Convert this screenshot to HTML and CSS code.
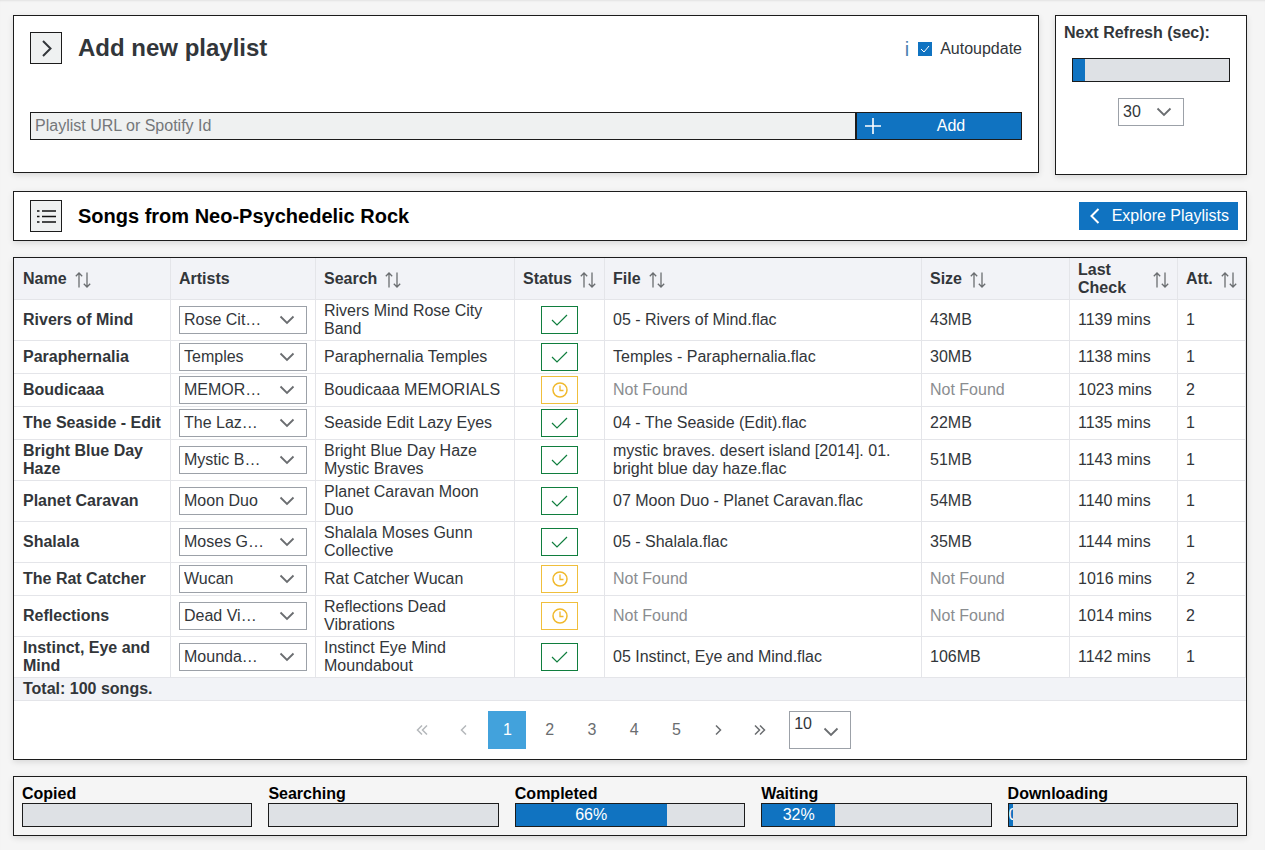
FILE: index.html
```html
<!doctype html>
<html lang="en">
<head>
<meta charset="utf-8">
<title>Songs from Neo-Psychedelic Rock</title>
<link rel="stylesheet" href="styles.css">
</head>
<body>

	<svg class="defs" width="0" height="0" aria-hidden="true">
		<symbol id="icoDown" viewBox="0 0 16 10"><path d="M1.500 1.500 8 8l6.500-6.500" fill="none" stroke="currentColor" stroke-width="1.800"/></symbol>
		<symbol id="icoSort" viewBox="0 0 16 16"><path d="M4 15.500V1M.8 4.200 4 1l3.200 3.200M12 .5V15M8.800 11.800 12 15l3.200-3.200" fill="none" stroke="currentColor" stroke-width="1.300"/></symbol>
		<symbol id="icoCheck" viewBox="0 0 17 12"><path d="M1 6 6 11 16 1" fill="none" stroke="currentColor" stroke-width="1.200"/></symbol>
		<symbol id="icoClock" viewBox="0 0 16 16"><circle cx="8" cy="8" r="7" fill="none" stroke="currentColor" stroke-width="1.500"/><path d="M8 3.500V8.500H11.500" fill="none" stroke="currentColor" stroke-width="1.300"/></symbol>
		<symbol id="icoFirst" viewBox="0 0 12 10"><path d="M6 .5 1.500 5 6 9.500M11 .5 6.500 5 11 9.500" fill="none" stroke="currentColor" stroke-width="1.500"/></symbol>
		<symbol id="icoPrev" viewBox="0 0 12 10"><path d="M8 .5 3.500 5 8 9.500" fill="none" stroke="currentColor" stroke-width="1.500"/></symbol>
		<symbol id="icoNext" viewBox="0 0 12 10"><path d="M4 .5 8.500 5 4 9.500" fill="none" stroke="currentColor" stroke-width="1.500"/></symbol>
		<symbol id="icoLast" viewBox="0 0 12 10"><path d="M1 .5 5.500 5 1 9.500M6 .5 10.500 5 6 9.500" fill="none" stroke="currentColor" stroke-width="1.500"/></symbol>
	</svg>

	<div class="topRow">

		<div class="panel addPanel">

			<div class="addHead">
				<div class="iconBtn"><svg class="toggleIco" width="12" height="17" viewBox="0 0 12 17"><path d="M2 1 9.500 8.500 2 16" fill="none" stroke="#32363a" stroke-width="2"/></svg></div>
				<h2 class="addTitle">Add new playlist</h2>
				<span class="info">i</span>
				<span class="checkBox"><svg width="10" height="8" viewBox="0 0 10 8"><path d="M1 4 4 7 9 1" fill="none" stroke="#fff" stroke-width="1"/></svg></span>
				<span class="autoLabel">Autoupdate</span>
			</div>

			<div class="addForm">
				<div class="addInput">Playlist URL or Spotify Id</div>
				<div class="addBtn">
					<svg class="plus" width="16" height="16" viewBox="0 0 16 16"><path d="M8 0V16M0 8H16" fill="none" stroke="#fff" stroke-width="1.600"/></svg>
					<span class="addLabel">Add</span>
				</div>
			</div>

		</div>

		<div class="panel refreshPanel">
			<div class="refreshTitle">Next Refresh (sec):</div>
			<div class="bar refreshBar"><div class="barFill" style="width: 8%"></div></div>
			<div class="select refreshSelect"><span class="selectText">30</span><svg class="selectIco"><use href="#icoDown"/></svg></div>
		</div>

	</div>

	<div class="panel songsBar">
		<div class="iconBtn">
			<svg width="19" height="13" viewBox="0 0 19 13"><path d="M5 1H19M5 6.500H19M5 12H19M0 1H2.500M0 6.500H2.500M0 12H2.500" fill="none" stroke="#111" stroke-width="1.700"/></svg>
		</div>
		<h3 class="songsTitle">Songs from Neo-Psychedelic Rock</h3>
		<div class="exploreBtn">
			<svg width="10" height="16" viewBox="0 0 10 16"><path d="M8.500 1 1.500 8 8.500 15" fill="none" stroke="#fff" stroke-width="2"/></svg>
			<span>Explore Playlists</span>
		</div>
	</div>

	<div class="panel tablePanel">

		<table class="songs">
			<colgroup>
				<col class="colName"><col class="colArtists"><col class="colSearch"><col class="colStatus">
				<col class="colFile"><col class="colSize"><col class="colCheck"><col class="colAtt">
			</colgroup>
			<thead>
				<tr>
					<th class="first"><div class="th"><span>Name</span><svg class="sort"><use href="#icoSort"/></svg></div></th>
					<th><div class="th"><span>Artists</span></div></th>
					<th><div class="th"><span>Search</span><svg class="sort"><use href="#icoSort"/></svg></div></th>
					<th><div class="th"><span>Status</span><svg class="sort"><use href="#icoSort"/></svg></div></th>
					<th><div class="th"><span>File</span><svg class="sort"><use href="#icoSort"/></svg></div></th>
					<th><div class="th"><span>Size</span><svg class="sort"><use href="#icoSort"/></svg></div></th>
					<th><div class="th"><span>Last Check</span><svg class="sort"><use href="#icoSort"/></svg></div></th>
					<th><div class="th"><span>Att.</span><svg class="sort"><use href="#icoSort"/></svg></div></th>
				</tr>
			</thead>
			<tbody>
				<tr>
					<td class="name">Rivers of Mind</td>
					<td><div class="select"><span class="selectText">Rose City Band</span><svg class="selectIco"><use href="#icoDown"/></svg></div></td>
					<td>Rivers Mind Rose City Band</td>
					<td><div class="status ok"><svg class="icoOk"><use href="#icoCheck"/></svg></div></td>
					<td>05 - Rivers of Mind.flac</td>
					<td>43MB</td>
					<td>1139 mins</td>
					<td>1</td>
				</tr>
				<tr>
					<td class="name">Paraphernalia</td>
					<td><div class="select"><span class="selectText">Temples</span><svg class="selectIco"><use href="#icoDown"/></svg></div></td>
					<td>Paraphernalia Temples</td>
					<td><div class="status ok"><svg class="icoOk"><use href="#icoCheck"/></svg></div></td>
					<td>Temples - Paraphernalia.flac</td>
					<td>30MB</td>
					<td>1138 mins</td>
					<td>1</td>
				</tr>
				<tr>
					<td class="name">Boudicaaa</td>
					<td><div class="select"><span class="selectText">MEMORIALS</span><svg class="selectIco"><use href="#icoDown"/></svg></div></td>
					<td>Boudicaaa MEMORIALS</td>
					<td><div class="status wait"><svg class="icoWait"><use href="#icoClock"/></svg></div></td>
					<td class="missing">Not Found</td>
					<td class="missing">Not Found</td>
					<td>1023 mins</td>
					<td>2</td>
				</tr>
				<tr>
					<td class="name">The Seaside - Edit</td>
					<td><div class="select"><span class="selectText">The Lazy Eyes</span><svg class="selectIco"><use href="#icoDown"/></svg></div></td>
					<td>Seaside Edit Lazy Eyes</td>
					<td><div class="status ok"><svg class="icoOk"><use href="#icoCheck"/></svg></div></td>
					<td>04 - The Seaside (Edit).flac</td>
					<td>22MB</td>
					<td>1135 mins</td>
					<td>1</td>
				</tr>
				<tr>
					<td class="name">Bright Blue Day Haze</td>
					<td><div class="select"><span class="selectText">Mystic Braves</span><svg class="selectIco"><use href="#icoDown"/></svg></div></td>
					<td>Bright Blue Day Haze Mystic Braves</td>
					<td><div class="status ok"><svg class="icoOk"><use href="#icoCheck"/></svg></div></td>
					<td>mystic braves. desert island [2014]. 01. bright blue day haze.flac</td>
					<td>51MB</td>
					<td>1143 mins</td>
					<td>1</td>
				</tr>
				<tr>
					<td class="name">Planet Caravan</td>
					<td><div class="select"><span class="selectText">Moon Duo</span><svg class="selectIco"><use href="#icoDown"/></svg></div></td>
					<td>Planet Caravan Moon Duo</td>
					<td><div class="status ok"><svg class="icoOk"><use href="#icoCheck"/></svg></div></td>
					<td>07 Moon Duo - Planet Caravan.flac</td>
					<td>54MB</td>
					<td>1140 mins</td>
					<td>1</td>
				</tr>
				<tr>
					<td class="name">Shalala</td>
					<td><div class="select"><span class="selectText">Moses Gunn Collective</span><svg class="selectIco"><use href="#icoDown"/></svg></div></td>
					<td>Shalala Moses Gunn Collective</td>
					<td><div class="status ok"><svg class="icoOk"><use href="#icoCheck"/></svg></div></td>
					<td>05 - Shalala.flac</td>
					<td>35MB</td>
					<td>1144 mins</td>
					<td>1</td>
				</tr>
				<tr>
					<td class="name">The Rat Catcher</td>
					<td><div class="select"><span class="selectText">Wucan</span><svg class="selectIco"><use href="#icoDown"/></svg></div></td>
					<td>Rat Catcher Wucan</td>
					<td><div class="status wait"><svg class="icoWait"><use href="#icoClock"/></svg></div></td>
					<td class="missing">Not Found</td>
					<td class="missing">Not Found</td>
					<td>1016 mins</td>
					<td>2</td>
				</tr>
				<tr>
					<td class="name">Reflections</td>
					<td><div class="select"><span class="selectText">Dead Vibrations</span><svg class="selectIco"><use href="#icoDown"/></svg></div></td>
					<td>Reflections Dead Vibrations</td>
					<td><div class="status wait"><svg class="icoWait"><use href="#icoClock"/></svg></div></td>
					<td class="missing">Not Found</td>
					<td class="missing">Not Found</td>
					<td>1014 mins</td>
					<td>2</td>
				</tr>
				<tr>
					<td class="name">Instinct, Eye and Mind</td>
					<td><div class="select"><span class="selectText">Moundabout</span><svg class="selectIco"><use href="#icoDown"/></svg></div></td>
					<td>Instinct Eye Mind Moundabout</td>
					<td><div class="status ok"><svg class="icoOk"><use href="#icoCheck"/></svg></div></td>
					<td>05 Instinct, Eye and Mind.flac</td>
					<td>106MB</td>
					<td>1142 mins</td>
					<td>1</td>
				</tr>
			</tbody>
		</table>

		<div class="total">Total: 100 songs.</div>

		<div class="pager">
			<span class="page off"><svg class="pageIco"><use href="#icoFirst"/></svg></span>
			<span class="page off"><svg class="pageIco"><use href="#icoPrev"/></svg></span>
			<span class="page active">1</span>
			<span class="page">2</span>
			<span class="page">3</span>
			<span class="page">4</span>
			<span class="page">5</span>
			<span class="page"><svg class="pageIco"><use href="#icoNext"/></svg></span>
			<span class="page"><svg class="pageIco"><use href="#icoLast"/></svg></span>
			<div class="select pageSelect"><span class="selectText">10</span><svg class="selectIco"><use href="#icoDown"/></svg></div>
		</div>

	</div>

	<div class="panel statsPanel">
		<div class="stat"><div class="statLabel">Copied</div><div class="bar statBar"></div></div>
		<div class="stat"><div class="statLabel">Searching</div><div class="bar statBar"></div></div>
		<div class="stat"><div class="statLabel">Completed</div><div class="bar statBar"><div class="barFill" style="width: 66%">66%</div></div></div>
		<div class="stat"><div class="statLabel">Waiting</div><div class="bar statBar"><div class="barFill" style="width: 32%">32%</div></div></div>
		<div class="stat"><div class="statLabel">Downloading</div><div class="bar statBar"><div class="barFill" style="width: 2%">0%</div></div></div>
	</div>

</body>
</html>
```

FILE: styles.css
```css
	html { --blue: #1073c1; --ink: #32363a; --line: #1c1c1c; --cell: #e4e5e9; --head: #f2f3f7; --track: #dee1e5; height: 100%; }

	body { background-color: #f5f5f5; box-shadow: inset 0 2px 2px -1px rgba( 0, 0, 0, .08 ); box-sizing: border-box; color: var( --ink ); font: 16px/18px "Liberation Sans", Arial, sans-serif; height: 100%; margin: 0; overflow: hidden; padding: 15px 18px 0 13px; }

	h2, h3 { margin: 0; }

	.defs { position: absolute; }

	.panel { background-color: #fff; border: 1px solid var( --line ); box-shadow: 0 2px 6px rgba( 0, 0, 0, .12 ); box-sizing: border-box; }

	.topRow { align-items: flex-start; display: flex; gap: 16px; margin-bottom: 16px; }

	.addPanel { flex: 1; height: 158px; padding: 16px 16px 0; }
	.addHead { align-items: center; display: flex; height: 32px; }
	.addTitle { flex: 1; font-size: 24px; line-height: 32px; margin-left: 16px; }
	.info { color: #4a7fb0; font-size: 20px; margin: 2px 9px 0 0; }
	.checkBox { align-items: center; background-color: var( --blue ); display: flex; height: 14px; justify-content: center; margin: 2px 8px 0 0; width: 14px; }
	.autoLabel { margin-top: 2px; white-space: nowrap; }

	.iconBtn { align-items: center; background-color: #eff1f1; border: 1px solid var( --line ); box-sizing: border-box; display: flex; flex: none; height: 32px; justify-content: center; width: 32px; }
	.toggleIco { margin-left: 2px; }

	.addForm { display: flex; height: 28px; margin-top: 48px; }
	.addInput { background-color: #eff1f1; border: 1px solid var( --line ); box-sizing: border-box; color: #74777a; flex: 1; line-height: 26px; padding-left: 4px; }
	.addBtn { align-items: center; background-color: var( --blue ); border: 1px solid var( --line ); box-sizing: border-box; color: #fff; display: flex; padding-left: 8px; width: 166px; }
	.plus { flex: none; }
	.addLabel { flex: 1; text-align: center; }

	.refreshPanel { flex: none; height: 160px; padding: 7px 16px 0 8px; width: 192px; }
	.refreshTitle { font-weight: bold; line-height: 20px; white-space: nowrap; }
	.refreshBar { height: 24px; margin: 15px 0 0 8px; width: 158px; }
	.refreshSelect { margin: 16px 0 0 54px; width: 66px; }

	.bar { background-color: var( --track ); border: 1px solid var( --line ); box-sizing: border-box; overflow: hidden; }
	.barFill { background-color: var( --blue ); color: #fff; height: 100%; line-height: 21px; overflow: hidden; text-align: center; white-space: nowrap; }

	.select { align-items: center; background-color: #fff; border: 1px solid #9ca1a8; box-sizing: border-box; display: flex; height: 28px; padding: 0 11px 0 4px; }
	.selectText { flex: 1; min-width: 0; overflow: hidden; text-overflow: ellipsis; white-space: nowrap; }
	.selectIco { color: #6a6d70; flex: none; height: 10px; margin-left: 14px; width: 16px; }

	.songsBar { align-items: center; display: flex; height: 50px; margin-bottom: 16px; padding: 0 8px 0 16px; }
	.songsTitle { color: #000; flex: 1; font-size: 20px; line-height: 24px; margin-left: 16px; }
	.exploreBtn { align-items: center; background-color: var( --blue ); color: #fff; display: flex; gap: 12px; height: 28px; padding: 0 9px 0 11px; }

	.tablePanel { height: 503px; margin-bottom: 16px; }

	.songs { border-collapse: separate; border-spacing: 0; table-layout: fixed; width: 100%; }
	.colName { width: 157px; }
	.colArtists { width: 145px; }
	.colSearch { width: 199px; }
	.colStatus { width: 90px; }
	.colFile { width: 317px; }
	.colSize { width: 148px; }
	.colCheck { width: 108px; }
	.colAtt { width: 68px; }

	.songs th { background-color: var( --head ); border-bottom: 1px solid var( --cell ); border-right: 1px solid var( --cell ); font-weight: bold; padding: 3px 8px 2px; text-align: left; }
	.songs td { border-bottom: 1px solid var( --cell ); border-right: 1px solid var( --cell ); padding: 2px 8px; }

	.th { align-items: center; display: flex; gap: 8px; min-height: 36px; }
	.sort { color: #6a6d70; flex: none; height: 16px; margin-top: 2px; width: 16px; }

	.songs th.first, .songs .name { font-weight: bold; padding-left: 9px; }
	.songs .missing { color: #8a8d90; }

	.status { align-items: center; border: 1px solid; box-sizing: border-box; display: flex; height: 28px; justify-content: center; margin: 0 auto; width: 37px; }
	.ok { border-color: #107e3e; color: #107e3e; }
	.wait { border-color: #f0bf3c; color: #f0b92c; }
	.icoOk { height: 12px; width: 17px; }
	.icoWait { height: 16px; width: 16px; }

	.total { background-color: var( --head ); border-bottom: 1px solid var( --cell ); font-weight: bold; line-height: 18px; padding: 2px 9px; }

	.pager { align-items: center; display: flex; gap: 4.25px; justify-content: center; padding: 10px 5px 10px 0; }
	.page { align-items: center; color: #6a6d70; display: flex; height: 38px; justify-content: center; width: 38px; }
	.page.off { color: #b5b8bb; }
	.page.active { background-color: #42a2dc; color: #fff; }
	.pageIco { height: 10px; margin-right: 2px; width: 12px; }
	.pageSelect { align-items: flex-start; height: 38px; margin-left: 5px; padding: 3px 11px 0 4px; width: 62px; }
	.pageSelect .selectIco { margin: 12px 0 0 0; }

	.statsPanel { background-color: #f5f5f5; display: grid; gap: 16px; grid-template-columns: repeat( 5, 1fr ); height: 60px; padding: 8px; }
	.statLabel { color: #000; font-weight: bold; line-height: 18px; }
	.statBar { height: 24px; }
```
